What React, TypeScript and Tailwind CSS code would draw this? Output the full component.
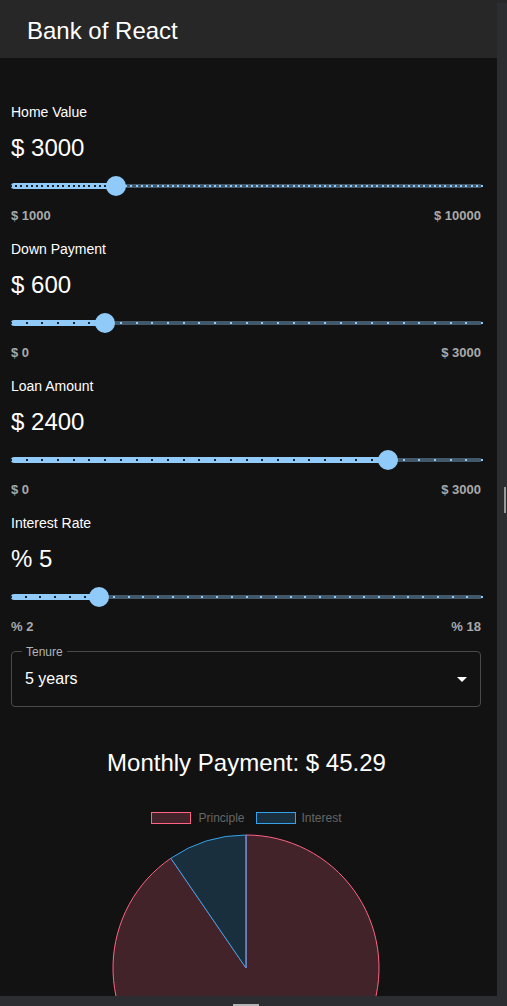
import clsx from 'clsx';

type SliderProps = { value: number; min: number; max: number; step: number };

function MarkSlider({ value, min, max, step }: SliderProps) {
  const pct = ((value - min) / (max - min)) * 100;
  const count = Math.round((max - min) / step);
  const marks = Array.from({ length: count + 1 }, (_, i) => (i / count) * 100);

  return (
    <div className="relative h-5 w-[471px]">
      <div className="absolute left-0 right-0 top-1/2 h-1 -translate-y-1/2 rounded-full bg-[#425869]" />
      <div
        className="absolute left-0 top-1/2 h-1.5 -translate-y-1/2 rounded-full bg-[#90caf9]"
        style={{ width: `${pct}%` }}
      />
      {marks.map((p, i) => (
        <span
          key={i}
          className={clsx(
            'absolute top-1/2 h-[2px] w-[2px] -translate-x-1/2 -translate-y-1/2',
            p < pct ? 'bg-[#1a2229]' : 'bg-[#90caf9]'
          )}
          style={{ left: `${p}%` }}
        />
      ))}
      <div
        className="absolute top-1/2 h-5 w-5 -translate-x-1/2 -translate-y-1/2 rounded-full bg-[#90caf9]"
        style={{ left: `${pct}%` }}
      />
    </div>
  );
}

type FieldProps = SliderProps & { label: string; unit: string; first?: boolean };

function SliderField({ label, unit, value, min, max, step, first }: FieldProps) {
  return (
    <section className={first ? '' : 'mt-[15px]'}>
      <p className="h-5 text-[14px] leading-5 text-white">{label}</p>
      <p className="mt-[10px] text-[24px] leading-8 text-white">
        {unit} {value}
      </p>
      <div className="mt-3">
        <MarkSlider value={value} min={min} max={max} step={step} />
      </div>
      <div className="mt-3 flex w-[470px] justify-between text-[13px] font-bold leading-4 text-[#a9a9a9]">
        <span>
          {unit} {min}
        </span>
        <span>
          {unit} {max}
        </span>
      </div>
    </section>
  );
}

function PieChart() {
  const cx = 134;
  const cy = 134;
  const r = 133;
  const a = (34.4 * Math.PI) / 180;
  const ex = cx - r * Math.sin(a);
  const ey = cy - r * Math.cos(a);

  return (
    <svg width="268" height="268" viewBox="0 0 268 268" className="ml-[101px] block">
      <path
        d={`M${cx} ${cy} L${cx} ${cy - r} A${r} ${r} 0 1 1 ${ex} ${ey} Z`}
        fill="#43232a"
        stroke="#ff6384"
        strokeWidth="1"
      />
      <path
        d={`M${cx} ${cy} L${ex} ${ey} A${r} ${r} 0 0 1 ${cx} ${cy - r} Z`}
        fill="#192f3d"
        stroke="#36a2eb"
        strokeWidth="1"
      />
      <line x1={cx} y1={cy} x2={cx} y2={cy - r} stroke="#6f82c4" strokeWidth="1.2" />
    </svg>
  );
}

export default function App() {
  return (
    <div className="flex h-[1006px] w-[507px] flex-col overflow-hidden bg-[#272727] font-['Liberation_Sans',Arial,sans-serif]">
      <div className="flex min-h-0 flex-1">
        <main className="h-full w-[497px] overflow-hidden bg-[#121212]">
          <header className="flex h-[58px] items-center bg-[#272727] pl-[27px] pt-[3px]">
            <h1 className="text-[24px] leading-8 text-white">Bank of React</h1>
          </header>

          <div className="ml-[11px] w-[471px] pt-[44px]">
            <SliderField first label="Home Value" unit="$" value={3000} min={1000} max={10000} step={100} />
            <SliderField label="Down Payment" unit="$" value={600} min={0} max={3000} step={100} />
            <SliderField label="Loan Amount" unit="$" value={2400} min={0} max={3000} step={100} />
            <SliderField label="Interest Rate" unit="%" value={5} min={2} max={18} step={0.5} />

            <div className="relative mt-4 flex h-[56px] w-[470px] items-center rounded border border-[#4a4a4a] pl-[13px]">
              <span className="absolute -top-2 left-[10px] bg-[#121212] px-1 text-[12px] leading-4 text-[#b3b3b3]">
                Tenure
              </span>
              <span className="text-[16px] leading-6 text-white">5 years</span>
              <svg viewBox="0 0 24 24" className="absolute right-[6px] top-1/2 h-6 w-6 -translate-y-1/2" fill="#ffffff">
                <path d="M7 10l5 5 5-5z" />
              </svg>
            </div>

            <h2 className="mt-10 text-center text-[24px] leading-8 text-white">Monthly Payment: $ 45.29</h2>

            <div className="mt-[33px] flex h-3 items-center justify-center text-[12px] leading-3 text-[#666666]">
              <span className="h-3 w-10 border-[1.5px] border-[#ff6384] bg-[#43232a]" />
              <span className="ml-[7px]">Principle</span>
              <span className="ml-[11px] h-3 w-10 border-[1.5px] border-[#36a2eb] bg-[#192f3d]" />
              <span className="ml-[6px]">Interest</span>
            </div>

            <div className="mt-[10px]">
              <PieChart />
            </div>
          </div>
        </main>
        <div className="mt-[3px] w-[10px] bg-[#2c2d30]">
          <div className="ml-[7px] mt-[484px] h-[26px] w-[2px] bg-[#9a9a9a]" />
        </div>
      </div>
      <div className="h-[10px] shrink-0 bg-[#2c2d30]">
        <div className="ml-[233px] mt-[8px] h-[2px] w-[26px] bg-[#b4b4b4]" />
      </div>
    </div>
  );
}
